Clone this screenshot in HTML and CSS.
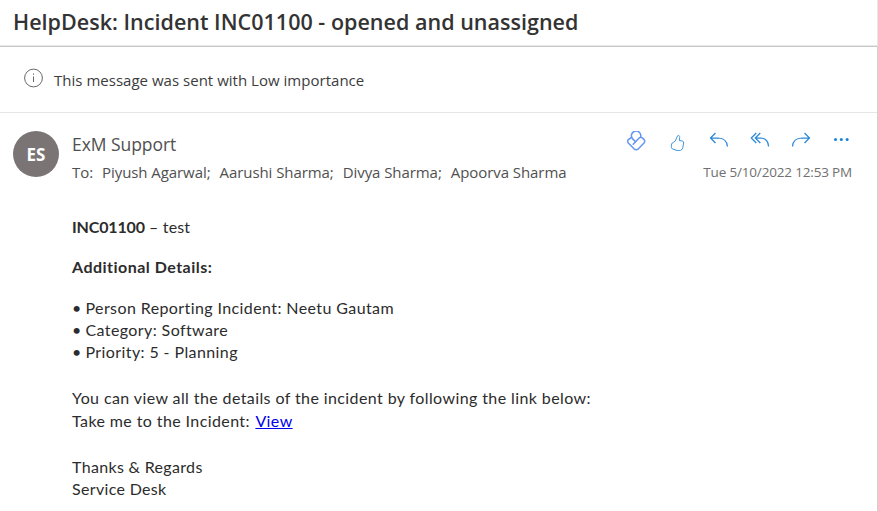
FILE: index.html
```html
<!DOCTYPE html>
<html lang="en">
<head>
  <meta charset="UTF-8" />
  <meta name="viewport" content="width=device-width, initial-scale=1.0"/>
  <title>HelpDesk: Incident INC01100</title>
  <link rel="stylesheet" href="styles.css">
</head>
<body>
  <header class="subject-bar">
    <h1 class="subject">HelpDesk: Incident INC01100 - opened and unassigned</h1>
  </header>

  <main class="message">
    <div class="notice">
      <svg class="notice-icon" width="20" height="20" viewBox="0 0 20 20" fill="none" stroke="#666">
        <circle cx="9.5" cy="10" r="8.9"/>
        <path d="M9.5 8.5v5.5M9.5 5.5v1.3"/>
      </svg>
      <span class="notice-text">This message was sent with Low importance</span>
    </div>

    <section class="envelope">
      <div class="avatar">ES</div>
      <div class="people">
        <div class="sender">ExM Support</div>
        <div class="recipients"><span>To:</span><span>Piyush Agarwal;</span><span>Aarushi Sharma;</span><span>Divya Sharma;</span><span>Apoorva Sharma</span></div>
      </div>
      <div class="meta">
        <div class="actions">
          <!-- Approvals -->
          <svg width="20" height="22" viewBox="0 0 20 22" stroke="#6495f5" stroke-width="1.5" stroke-linecap="round">
            <path d="M4.6 6.3L1.4 8.6Q0 10.2 1.3 11.9L7 17.8Q9.2 19.6 11.4 17.8L17 11.9Q18.4 10.2 17.1 8.6L15.2 6.8Q13.8 5.7 12.4 6.8L6.2 13.2"/>
            <path d="M8.5 10.6L5.6 7.9A4.7 4.7 0 1 1 13.7 5.6"/>
          </svg>
          <!-- Like -->
          <svg width="20" height="22" viewBox="0 0 20 22" stroke="#3e96db">
            <path d="M9.6 4.8C10.8 4 11.9 5 11.7 6.5L11.3 9.6L14.3 10Q15.8 10.4 15.6 12L14.8 16.7Q14.3 19 12.5 19.4Q10.2 19.8 8 19.2L4.3 17.8Q3.2 17.1 3.3 15.7L3.6 13.1Q3.9 11.9 5.2 11.6Q7.6 10.6 8.6 7Z"/>
          </svg>
          <!-- Reply -->
          <svg width="20" height="22" viewBox="0 0 20 22" stroke="#2b88d8" stroke-width="1.25">
            <path d="M6.5 2L1.5 7L6.5 12M1.5 7H9Q17.8 7.2 18.4 15.5"/>
          </svg>
          <!-- Reply all -->
          <svg width="20" height="22" viewBox="0 0 20 22" stroke="#2b88d8" stroke-width="1.25">
            <path d="M6.3 2L1.3 7L6.3 12M10.3 2L5.3 7L10.3 12M5.3 7H10.5Q18 7.2 18.6 15.5"/>
          </svg>
          <!-- Forward -->
          <svg width="20" height="22" viewBox="0 0 20 22" stroke="#2b88d8" stroke-width="1.25">
            <path d="M13.5 2L18.5 7L13.5 12M18.5 7H11Q2 7.2 1.5 15.5"/>
          </svg>
          <!-- More -->
          <svg width="20" height="22" viewBox="0 0 20 22">
            <g fill="#1683d8"><circle cx="3.5" cy="8.5" r="1.5"/><circle cx="9.3" cy="8.5" r="1.5"/><circle cx="15.1" cy="8.5" r="1.5"/></g>
          </svg>
        </div>
        <div class="date">Tue 5/10/2022 12:53 PM</div>
      </div>
    </section>

    <article class="mail-body">
      <p class="incident"><b>INC01100</b> – test</p>
      <p class="details-title"><b>Additional Details:</b></p>
      <ul class="details">
        <li>Person Reporting Incident: Neetu Gautam</li>
        <li>Category: Software</li>
        <li>Priority: 5 - Planning</li>
      </ul>
      <p class="link-text">You can view all the details of the incident by following the link below:<br>
      Take me to the Incident: <a href="#">View</a></p>
      <p class="signature">Thanks &amp; Regards<br>
      Service Desk</p>
    </article>
  </main>
</body>
</html>
```
FILE: styles.css
```css
* {
  box-sizing: border-box;
}

body {
  margin: 0;
  height: 511px;
  overflow: hidden;
  background: #fff;
  color: #2c2c2c;
  font-family: "Open Sans", "Noto Sans", sans-serif;
}

.subject-bar {
  height: 47px;
  padding: 6px 13px 0;
  border-right: 1px solid #e6e6e6;
  border-bottom: 1px solid #c8c8c8;
  box-shadow: inset 0 -1px 0 #e8e8e8;
}

.subject {
  margin: 0;
  font-size: 21.5px;
  line-height: 32px;
  font-weight: 600;
  letter-spacing: 0.02px;
  color: #333;
  white-space: nowrap;
}

.message {
  height: 464px;
  border-right: 1px solid #d0d0d0;
}

.notice {
  display: flex;
  height: 66px;
  padding: 21px 0 0 24px;
  gap: 10px;
  border-bottom: 1px solid #e6e6e6;
}

.notice-text {
  font-size: 15px;
  line-height: 24px;
  letter-spacing: 0.02px;
  color: #3c3c3c;
}

.envelope {
  display: flex;
  height: 94px;
  padding: 17px 25px 0 13px;
  white-space: nowrap;
}

.avatar {
  width: 46px;
  height: 46px;
  margin-top: 1px;
  border-radius: 50%;
  background: #7a7574;
  color: #fff;
  font-size: 17px;
  font-weight: 700;
  line-height: 47px;
  text-align: center;
}

.people {
  flex: 1;
  padding-left: 13px;
}

.sender {
  font-size: 17.5px;
  line-height: 28px;
  letter-spacing: -0.05px;
  color: #505050;
}

.recipients {
  display: flex;
  gap: 9px;
  font-size: 15px;
  line-height: 28px;
  letter-spacing: -0.07px;
  color: #505050;
}

.actions {
  display: flex;
  justify-content: flex-end;
  gap: 21px;
  height: 28px;
}

.actions svg {
  fill: none;
  margin-top: 1px;
}

.date {
  font-size: 13.5px;
  line-height: 28px;
  letter-spacing: -0.17px;
  text-align: right;
  color: #707070;
}

.mail-body {
  padding: 9px 72px 0;
  font-family: Lato, sans-serif;
  font-size: 16px;
  line-height: 22px;
  letter-spacing: 0.4px;
  white-space: nowrap;
}

.mail-body p {
  margin: 0;
}

.incident b {
  letter-spacing: -0.15px;
}

.incident {
  letter-spacing: 0.15px;
}

.mail-body .details-title {
  margin-top: 18px;
  letter-spacing: 0.48px;
}

.details {
  margin: 19px 0 23px;
  padding: 0;
  list-style: none;
}

.details li::before {
  content: "•";
  display: inline-block;
  width: 13.5px;
}

.link-text {
  line-height: 23px;
}

.link-text a {
  margin-left: 1px;
  color: #0000ee;
}

.mail-body .signature {
  margin-top: 24px;
  letter-spacing: 0.33px;
}
```
